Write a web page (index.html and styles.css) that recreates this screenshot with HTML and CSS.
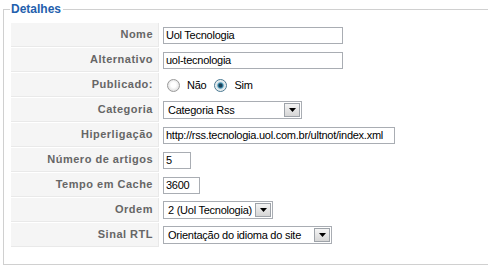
FILE: index.html
```html
<!DOCTYPE html>
<html lang="pt">
<head>
<meta charset="utf-8">
<title>Detalhes</title>
<link rel="stylesheet" href="styles.css">
</head>
<body>
<div class="page">
  <fieldset class="details">
    <legend>Detalhes</legend>
    <div class="form-grid">
      <div class="key">Nome</div>
      <div class="val"><span class="field w-name">Uol Tecnologia</span></div>

      <div class="key">Alternativo</div>
      <div class="val"><span class="field w-name">uol-tecnologia</span></div>

      <div class="key">Publicado:</div>
      <div class="val radios">
        <span class="radio"></span><span class="rlabel">Não</span>
        <span class="radio checked"></span><span class="rlabel">Sim</span>
      </div>

      <div class="key">Categoria</div>
      <div class="val"><span class="select w-cat"><span class="sel-text">Categoria Rss</span><span class="sel-btn"><svg width="7" height="4" viewBox="0 0 7 4"><path d="M0 0H7L3.5 4Z" fill="#000"/></svg></span></span></div>

      <div class="key">Hiperligação</div>
      <div class="val"><span class="field w-url">http://rss.tecnologia.uol.com.br/ultnot/index.xml</span></div>

      <div class="key">Número de artigos</div>
      <div class="val"><span class="field w-num">5</span></div>

      <div class="key">Tempo em Cache</div>
      <div class="val"><span class="field w-cache">3600</span></div>

      <div class="key">Ordem</div>
      <div class="val"><span class="select w-ord"><span class="sel-text">2 (Uol Tecnologia)</span><span class="sel-btn"><svg width="7" height="4" viewBox="0 0 7 4"><path d="M0 0H7L3.5 4Z" fill="#000"/></svg></span></span></div>

      <div class="key">Sinal RTL</div>
      <div class="val"><span class="select w-rtl"><span class="sel-text">Orientação do idioma do site</span><span class="sel-btn"><svg width="7" height="4" viewBox="0 0 7 4"><path d="M0 0H7L3.5 4Z" fill="#000"/></svg></span></span></div>
    </div>
  </fieldset>
</div>
</body>
</html>
```
FILE: styles.css
```css
html, body {
  margin: 0;
  padding: 0;
  background: #fff;
  overflow: hidden;
}
body {
  font-family: "Liberation Sans", Arial, sans-serif;
  font-size: 11px;
  color: #000;
}
.page {
  padding: 2px 0 0 3px;
}
.details {
  box-sizing: border-box;
  margin: 0;
  width: 100%;
  border: 1px solid #d0d0d0;
  border-right: none;
  padding: 6px 0 16px 6px;
  min-width: 0;
}
.details legend {
  font-size: 12px;
  font-weight: bold;
  line-height: 14px;
  color: #2360ad;
  padding: 0 2px 0 1px;
}
.form-grid {
  display: grid;
  grid-template-columns: 148px 1fr;
  grid-auto-rows: 24px;
  gap: 1px;
  padding: 1px;
}
.key {
  box-sizing: border-box;
  background: #f5f5f5;
  border-bottom: 1px solid #e9e9e9;
  border-right: 1px solid #e9e9e9;
  color: #666;
  font-weight: bold;
  letter-spacing: 0.5px;
  text-align: right;
  padding-right: 5px;
  line-height: 23px;
  white-space: nowrap;
}
.val {
  display: flex;
  align-items: center;
  padding-left: 3px;
  letter-spacing: -0.25px;
}
.field {
  box-sizing: border-box;
  display: block;
  height: 17px;
  line-height: 15px;
  border: 1px solid #a9adb3;
  padding: 0 2px;
  white-space: nowrap;
  overflow: hidden;
  background: #fff;
}
.w-name { width: 180px; }
.w-url { width: 232px; }
.w-num { width: 28px; }
.w-cache { width: 37px; }
.select {
  box-sizing: border-box;
  display: flex;
  align-items: center;
  height: 18px;
  border: 1px solid #a9adb3;
  background: #fff;
  padding: 0 1px 0 4px;
}
.sel-text {
  flex: 1;
  white-space: nowrap;
  line-height: 16px;
}
.sel-btn {
  box-sizing: border-box;
  width: 16px;
  height: 14px;
  border: 1px solid #9ea3a9;
  background: linear-gradient(#f4f4f4, #d6d6d6);
  display: flex;
  align-items: center;
  justify-content: center;
}
.w-cat { width: 139px; }
.w-ord { width: 110px; }
.w-rtl { width: 169px; }
.radios .radio {
  box-sizing: border-box;
  width: 13px;
  height: 13px;
  border-radius: 50%;
  border: 1px solid #9a9a9a;
  background: radial-gradient(circle at 50% 45%, #fff 0 30%, #e4e4e4 70%, #cfcfcf 100%);
  margin-left: 4px;
}
.radios .radio.checked {
  margin-left: 8px;
  background: radial-gradient(circle at 50% 50%, #1b3f57 0 18%, #3a8fb0 32%, #d8e4ea 48%, #f1f1f1 70%, #d4d4d4 100%);
  border-color: #4a7a93;
}
.radios .rlabel {
  margin-left: 7px;
}
```
